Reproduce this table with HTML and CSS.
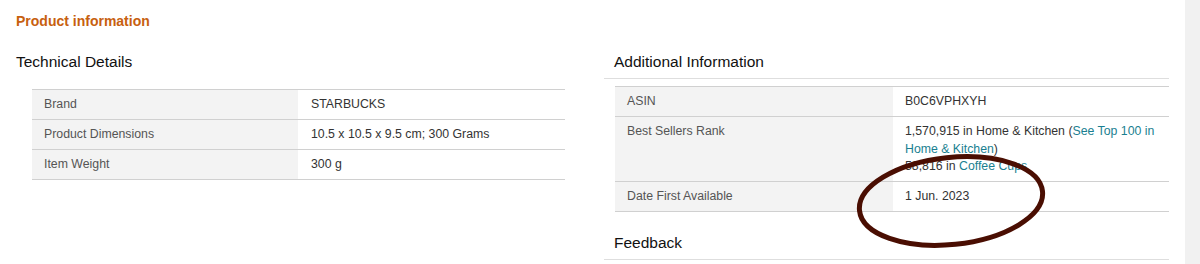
FILE: index.html
```html
<!DOCTYPE html>
<html>
<head>
<meta charset="utf-8">
<link rel="stylesheet" href="styles.css">
</head>
<body>
<div class="page">
  <main class="content">
    <h1 class="title">Product information</h1>
    <div class="cols">
      <section class="col-left">
        <h2 class="heading">Technical Details</h2>
        <div class="table table-left">
          <div class="row"><div class="label">Brand</div><div class="value">STARBUCKS</div></div>
          <div class="row"><div class="label">Product Dimensions</div><div class="value">10.5 x 10.5 x 9.5 cm; 300 Grams</div></div>
          <div class="row"><div class="label">Item Weight</div><div class="value">300 g</div></div>
        </div>
      </section>
      <section class="col-right">
        <h2 class="heading heading-rule">Additional Information</h2>
        <div class="table table-right">
          <div class="row"><div class="label">ASIN</div><div class="value">B0C6VPHXYH</div></div>
          <div class="row row-tall"><div class="label">Best Sellers Rank</div><div class="value">1,570,915 in Home &amp; Kitchen (<a class="link" href="#">See Top 100 in Home &amp; Kitchen</a>)<br>58,816 in <a class="link" href="#">Coffee Cups</a></div></div>
          <div class="row"><div class="label">Date First Available</div><div class="value">1 Jun. 2023</div></div>
        </div>
        <h2 class="heading heading-rule feedback">Feedback</h2>
      </section>
    </div>
    <svg class="circle" width="230" height="120" viewBox="0 0 230 120">
      <ellipse cx="115" cy="60" rx="92" ry="43.5" transform="rotate(-6 115 60)" fill="none" stroke="#4a0e02" stroke-width="5"/>
    </svg>
  </main>
  <div class="scrollbar"></div>
</div>
</body>
</html>
```
FILE: styles.css
```css
* { box-sizing: border-box; }
html, body { margin: 0; padding: 0; background: #fff; }
body { font-family: "Liberation Sans", Arial, sans-serif; color: #333; }
.page { display: flex; width: 1200px; height: 264px; overflow: hidden; }
.content { position: relative; width: 1185px; padding: 13px 16px 0 16px; }
.scrollbar { width: 15px; background: #f1f1f1; }
.title { margin: 0; font-size: 14px; line-height: 17px; font-weight: bold; color: #c7600f; }
.cols { display: grid; grid-template-columns: 549px 565px; column-gap: 39px; margin-top: 22px; }
.heading { margin: 0; font-size: 15.5px; line-height: 19px; font-weight: normal; color: #111; }
.heading-rule { padding: 0 0 7px 10px; border-bottom: 1px solid #dedede; }
.table { border-top: 1px solid #d0d0d0; font-size: 12.3px; }
.table-left { margin: 18px 0 0 16px; }
.table-right { margin: 7px 0 0 11px; }
.row { display: grid; grid-template-columns: 50% 50%; border-bottom: 1px solid #d0d0d0; }
.table-left .row { grid-template-columns: 266px 1fr; }
.table-right .row { grid-template-columns: 278px 1fr; }
.label { background: #f3f3f3; color: #555; padding: 6px 12px; line-height: 17px; }
.value { color: #333; padding: 6px 12px; line-height: 17px; }
.row-tall .value { line-height: 17.5px; padding-bottom: 5px; }
.table-left .value { padding-left: 13px; }
.link { color: #1a7f91; text-decoration: none; }
.feedback { margin-top: 21px; }
.circle { position: absolute; left: 836px; top: 141px; }
```
